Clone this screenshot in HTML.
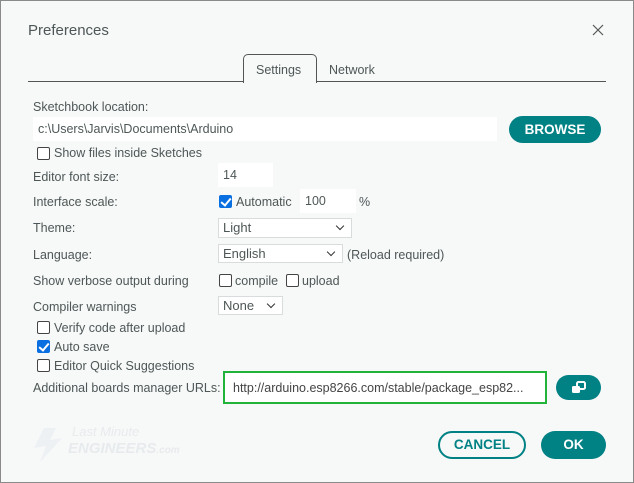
<!DOCTYPE html>
<html><head><meta charset="utf-8"><style>
*{margin:0;padding:0;box-sizing:border-box}
body{width:634px;height:483px;overflow:hidden;background:#fff;font-family:"Liberation Sans",sans-serif;color:#4e5757;font-size:13px}
#d{position:absolute;left:0;top:0;width:634px;height:483px;background:#f7f8f8}
#bd{position:absolute;left:0;top:0;width:634px;height:483px;border:1px solid #8a8a8a;pointer-events:none}
.a{position:absolute;white-space:nowrap}
.l{font-size:12.5px;line-height:14px}
.in{position:absolute;background:#fff;font-size:12.5px;padding-left:5px;line-height:24px}
.sel{position:absolute;background:#fff;border:1px solid #d8dcdc;font-size:13px;padding-left:4px}
.sel:after{content:"";position:absolute;right:8px;top:4px;width:5px;height:5px;border-right:1.6px solid #333;border-bottom:1.6px solid #333;transform:rotate(45deg)}
.cb{position:absolute;width:13px;height:13px;border:1px solid #444;border-radius:2px;background:#fff}
.cbc{position:absolute;width:13px;height:13px;border-radius:2px;background:#0a6fe0}
.cbc:after{content:"";position:absolute;left:4px;top:1px;width:4px;height:8px;border-right:2px solid #fff;border-bottom:2px solid #fff;transform:rotate(40deg)}
.btn{position:absolute;border-radius:15px;background:#008184;color:#fff;font-weight:bold;font-size:13.5px;text-align:center}
</style></head><body><div id="d">
<div class="a" style="left:28px;top:22px;font-size:15px">Preferences</div>
<svg class="a" style="left:592px;top:24px" width="12" height="12"><path d="M1 1L11 11M11 1L1 11" stroke="#555" stroke-width="1.2"/></svg>
<div class="a" style="left:28px;top:81px;width:578px;height:1px;background:#555"></div>
<div class="a" style="left:243px;top:54px;width:74px;height:29px;border:1px solid #555;border-bottom:none;border-radius:5px 5px 0 0;background:#f7f8f8"></div>
<div class="a l" style="left:256px;top:63px">Settings</div>
<div class="a l" style="left:329px;top:63px">Network</div>
<div class="a l" style="left:33px;top:100px">Sketchbook location:</div>
<div class="in" style="left:33px;top:117px;width:464px;height:24px">c:\Users\Jarvis\Documents\Arduino</div>
<div class="btn" style="left:509px;top:116px;width:92px;height:27px;line-height:27px">BROWSE</div>
<div class="cb" style="left:37px;top:147px"></div><div class="a l" style="left:54px;top:146px">Show files inside Sketches</div>
<div class="a l" style="left:33px;top:170px">Editor font size:</div>
<div class="in" style="left:218px;top:163px;width:55px;height:24px">14</div>
<div class="a l" style="left:33px;top:195px">Interface scale:</div>
<div class="cbc" style="left:219px;top:195px"></div><div class="a l" style="left:236px;top:195px">Automatic</div>
<div class="in" style="left:300px;top:189px;width:56px;height:24px">100</div>
<div class="a l" style="left:359px;top:195px">%</div>
<div class="a l" style="left:33px;top:221px">Theme:</div>
<div class="sel" style="left:218px;top:218px;width:134px;height:20px;line-height:17px">Light</div>
<div class="a l" style="left:33px;top:248px">Language:</div>
<div class="sel" style="left:218px;top:244px;width:125px;height:19px;line-height:17px">English</div>
<div class="a l" style="left:347px;top:248px">(Reload required)</div>
<div class="a l" style="left:33px;top:274px">Show verbose output during</div>
<div class="cb" style="left:219px;top:274px"></div><div class="a l" style="left:235px;top:274px">compile</div>
<div class="cb" style="left:286px;top:274px"></div><div class="a l" style="left:302px;top:274px">upload</div>
<div class="a l" style="left:33px;top:300px">Compiler warnings</div>
<div class="sel" style="left:218px;top:296px;width:65px;height:19px;line-height:17px">None</div>
<div class="cb" style="left:37px;top:321px"></div><div class="a l" style="left:54px;top:321px">Verify code after upload</div>
<div class="cbc" style="left:37px;top:340px"></div><div class="a l" style="left:54px;top:340px">Auto save</div>
<div class="cb" style="left:37px;top:359px"></div><div class="a l" style="left:54px;top:359px">Editor Quick Suggestions</div>
<div class="a l" style="left:33px;top:381px">Additional boards manager URLs:</div>
<div class="a" style="left:223px;top:371px;width:324px;height:33px;border:2px solid #22b33a;background:#fff"></div>
<div class="a l" style="left:233px;top:381px;color:#444">http://arduino.esp8266.com/stable/package_esp82...</div>
<div class="btn" style="left:556px;top:375px;width:45px;height:25px"><svg style="margin-top:6px" width="16" height="14"><rect x="6" y="1" width="8" height="7" rx="1.5" fill="none" stroke="#fff" stroke-width="2"/><rect x="1" y="5" width="8" height="7" rx="1.5" fill="#fff"/></svg></div>
<svg class="a" style="left:30px;top:426px" width="36" height="38"><path d="M14 2L4 22L16 20L10 36L32 12L20 14L26 2Z" fill="#eef1f4"/></svg>
<div class="a" style="left:72px;top:424px;font-size:13px;font-style:italic;color:#e8ebed">Last Minute</div>
<div class="a" style="left:68px;top:440px;font-size:15px;font-weight:bold;font-style:italic;color:#e8ebed">ENGINEERS<span style="font-size:10px">.com</span></div>
<div class="a" style="left:438px;top:431px;width:88px;height:28px;border:2px solid #008184;border-radius:15px;color:#008184;font-weight:bold;font-size:13.5px;text-align:center;line-height:24px">CANCEL</div>
<div class="btn" style="left:541px;top:431px;width:65px;height:28px;line-height:28px">OK</div>
</div><div id="bd"></div></body></html>
